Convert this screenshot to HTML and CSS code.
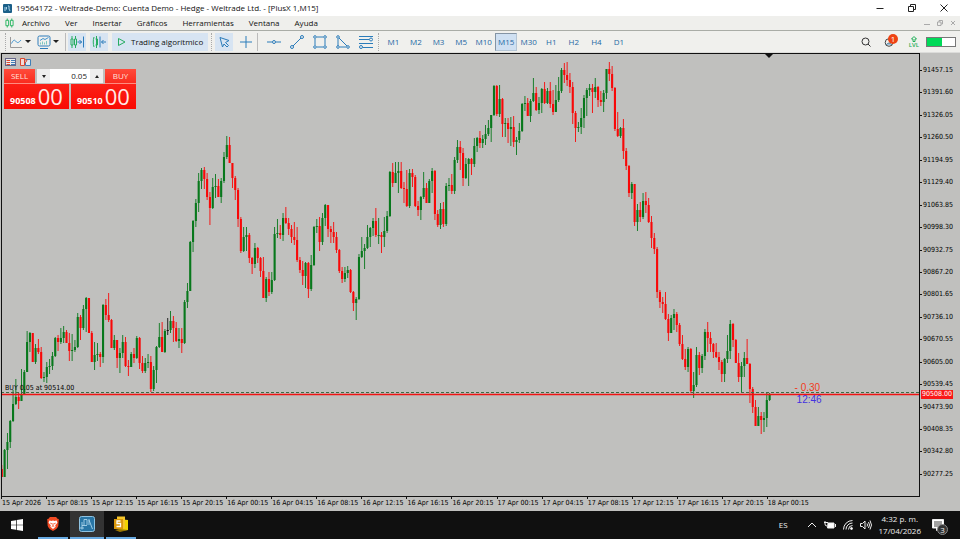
FILE: index.html
```html
<!DOCTYPE html>
<html lang="es">
<head>
<meta charset="utf-8">
<title>19564172 - Weltrade-Demo: Cuenta Demo - Hedge - Weltrade Ltd. - [PlusX 1,M15]</title>
<link rel="stylesheet" href="styles.css">
</head>
<body>
<header class="titlebar">
  <svg class="app-icon" viewBox="0 0 9 9"><rect width="9" height="9" rx="1" fill="#1b5f88"/><path d="M2 7V3M3.500 3v2.500M5 2h1v3l1 2" stroke="#a9d3ea" fill="none"/></svg>
  <h1 class="title">19564172 - Weltrade-Demo: Cuenta Demo - Hedge - Weltrade Ltd. - [PlusX 1,M15]</h1>
  <div class="window-buttons">
    <button aria-label="Minimizar"><svg viewBox="0 0 8 8"><path d="M0.500 4.500h7"/></svg></button>
    <button aria-label="Restaurar"><svg viewBox="0 0 8 8"><path d="M0.500 2.500h5v5h-5zM2.500 2V0.500h5v5H6"/></svg></button>
    <button aria-label="Cerrar"><svg viewBox="0 0 8 8"><path d="M0.500 0.500l7 7M7.500 0.500l-7 7"/></svg></button>
  </div>
</header>

<nav class="menubar">
  <svg class="menu-icon" viewBox="0 0 10 10"><path d="M2.500 0v2M2.500 8v2M1 2h3v6H1zM7.500 0v2M7.500 8v2M6 2h3v6H6z" fill="none" stroke="#1fb25a"/></svg>
  <a href="#">Archivo</a><a href="#">Ver</a><a href="#">Insertar</a><a href="#">Gráficos</a><a href="#">Herramientas</a><a href="#">Ventana</a><a href="#">Ayuda</a>
  <div class="child-buttons">
    <button aria-label="Minimizar gráfico"><svg viewBox="0 0 6 6"><path d="M0 4.500h6"/></svg></button>
    <button aria-label="Restaurar gráfico"><svg viewBox="0 0 6 6"><path d="M0.500 2h3.500v3.500h-3.500zM2 2V0.500h3.500v3.500H4"/></svg></button>
    <button aria-label="Cerrar gráfico"><svg viewBox="0 0 6 6"><path d="M1 1l4 4M5 1l-4 4"/></svg></button>
  </div>
</nav>

<div class="toolbar">
  <span class="grip"></span>
  <button class="tool tool-menu" aria-label="Tipo de gráfico"><svg class="icon" viewBox="0 0 14 14"><path d="M1.500 2v10.500H13" stroke="#9a9a9a"/><path d="M2.500 8.500c2-4 3-4 4.500-2s3 1 5-1.500" stroke="#3f93cf"/></svg><i class="caret"></i></button>
  <button class="tool tool-menu wide" aria-label="Indicadores"><svg class="icon" viewBox="0 0 14 14"><path d="M2.500 1h9q1.500 0 1.500 1.500v7q0 1.500-1.500 1.500h-9Q1 11 1 9.500v-7Q1 1 2.500 1zM3 13.500h8" stroke="#2f7dbb"/><path d="M3 5.500l3-2 2 1 3.500-2" stroke="#3f93cf"/><path d="M3.500 9.500V7.500M5.500 9.500V6.500M7.500 9.500V7.500M9.500 9.500V6" stroke="#7cc7c0"/></svg><i class="caret"></i></button>
  <span class="divider"></span>
  <button class="tool on" aria-label="Desplazamiento automático"><svg class="icon" viewBox="0 0 14 14"><path d="M2 1v3M2 10v3M1 4h2v6H1zM5.500 1v3M5.500 10v3M4.500 4h2v6h-2z" stroke="#27ad62"/><path d="M7.500 7H12M9.500 5l2 2-2 2M13.500 1.500v11" stroke="#2b7cba"/></svg></button>
  <button class="tool on" aria-label="Desplazar gráfico"><svg class="icon" viewBox="0 0 14 14"><path d="M2 2c-1 3-1 7 0 10M4.500 1v12M3.500 4h2v6h-2" stroke="#27ad62"/><path d="M8 1.500v11M14 7h-4.500M11.500 5l-2 2 2 2" stroke="#2b7cba"/></svg></button>
  <button class="tool on algo"><svg class="play" viewBox="0 0 9 10"><path d="M1.500 1.500v7L8 5z" fill="none" stroke="#27ad62"/></svg>Trading algorítmico</button>
  <span class="grip"></span>
  <button class="tool on" aria-label="Cursor"><svg class="icon" viewBox="0 0 14 14"><path d="M3 2.500l9 3-3.500 2 3 3-1.500 1.500-3-3-1.500 3z" stroke="#2b7cba"/></svg></button>
  <button class="tool draw" aria-label="Cruz"><svg class="icon" viewBox="0 0 14 14"><path d="M7 1v12M1 7h12" stroke="#2b7cba"/></svg></button>
  <span class="divider"></span>
  <div class="drawing">
    <button class="tool draw" aria-label="Línea horizontal"><svg class="icon" viewBox="0 0 14 14"><path d="M0 7h5M9 7h5" stroke="#2b7cba"/><circle cx="7" cy="7" r="1.500" stroke="#2b7cba"/></svg></button>
    <button class="tool draw" aria-label="Línea de tendencia"><svg class="icon" viewBox="0 0 14 14"><path d="M3 11l8-8" stroke="#2b7cba"/><circle cx="2" cy="12" r="1.500" stroke="#2b7cba"/><circle cx="12" cy="2" r="1.500" stroke="#2b7cba"/></svg></button>
    <button class="tool draw" aria-label="Rectángulo"><svg class="icon" viewBox="0 0 14 14"><path d="M2 4v6M12 4v6M4 2h6M4 12h6" stroke="#2b7cba"/><g stroke="#2b7cba"><circle cx="2" cy="2" r="1.300"/><circle cx="12" cy="2" r="1.300"/><circle cx="2" cy="12" r="1.300"/><circle cx="12" cy="12" r="1.300"/></g></svg></button>
    <button class="tool draw" aria-label="Triángulo"><svg class="icon" viewBox="0 0 14 14"><path d="M2 4v7M3 3l8 8M4 12h6" stroke="#2b7cba"/><g stroke="#2b7cba"><circle cx="2" cy="2" r="1.300"/><circle cx="2" cy="12" r="1.300"/><circle cx="12" cy="12" r="1.300"/></g></svg></button>
    <button class="tool draw" aria-label="Fibonacci"><svg class="icon" viewBox="0 0 14 14"><path d="M0 1.500h14M0 4.500h10M0 8.500h14M4 12.500h10" stroke="#2b7cba"/><circle cx="12" cy="4.500" r="1.500" stroke="#2b7cba"/><circle cx="2" cy="12" r="1.500" stroke="#2b7cba"/></svg></button>
  </div>
  <span class="grip"></span>
  <div class="timeframes">
    <button>M1</button><button>M2</button><button>M3</button><button>M5</button><button>M10</button><button class="selected">M15</button><button>M30</button><button>H1</button><button>H2</button><button>H4</button><button>D1</button>
  </div>
  <div class="toolbar-right">
    <button class="tool" aria-label="Buscar"><svg class="small-icon" viewBox="0 0 10 10"><circle cx="4.500" cy="4.500" r="3.500" stroke="#333"/><path d="M7 7l2.500 2.500" stroke="#333"/></svg></button>
    <button class="tool notice" aria-label="Notificaciones"><svg class="small-icon" viewBox="0 0 10 10"><circle cx="5" cy="5.500" r="3.800" stroke="#444"/><path d="M2 8q3-4 6 0" fill="#9fc4de" stroke="#5b7d93"/></svg><span class="badge">1</span></button>
    <button class="level" aria-label="Nivel"><svg viewBox="0 0 8 6"><path d="M4 0.500l2.500 2.500H5v2.500H3V3H1.500z" fill="none" stroke="#1dae56"/></svg>LVL</button>
    <span class="meter"><span></span></span>
  </div>
</div>

<main class="chart">
  <section class="plot">
    <svg id="candles" viewBox="2 54 917 442" preserveAspectRatio="none" role="img" aria-label="Gráfico de velas PlusX 1, M15"></svg>
    <span class="order-label">BUY 0.05 at 90514.00</span>
    <div class="position-info"><span class="result">- 0.30</span><span class="countdown">12:46</span></div>
    <div class="trade-panel">
      <div class="panel-icons">
        <svg viewBox="0 0 11 8"><rect x="0.500" y="0.500" width="10" height="7" fill="#eee" stroke="#668"/><path d="M1.500 2.500h3.500M1.500 4.500h3.500M1.500 6.500h3.500" stroke="#d9482f"/><path d="M6 2.500h4M6 4.500h4M6 6.500h4" stroke="#3f7fb8"/></svg>
        <svg viewBox="0 0 11 8"><path d="M0.500 0.500h4v7h-4z" fill="#f2dcd8" stroke="#d9482f"/><path d="M6 1.500h4.500v6H5.500V4" fill="#dbe8f2" stroke="#3f7fb8"/><path d="M4 1l3 1.500-2 2.500" stroke="#d9482f"/></svg>
      </div>
      <div class="order-row">
        <button class="side">SELL</button>
        <div class="volume">
          <button aria-label="Menos"><svg viewBox="0 0 4 3"><path d="M0 0h4L2 3z"/></svg></button>
          <input type="text" value="0.05" aria-label="Volumen">
          <button aria-label="Más"><svg viewBox="0 0 4 3"><path d="M0 3h4L2 0z"/></svg></button>
        </div>
        <button class="side">BUY</button>
      </div>
      <div class="quote-row">
        <button class="quote"><small>90508</small><b>00</b></button>
        <button class="quote"><small>90510</small><b>00</b></button>
      </div>
    </div>
  </section>
  <div class="prices" id="prices"><span class="last-price">90508.00</span></div>
  <div class="times" id="times"></div>
</main>

<footer class="taskbar">
  <button class="start" aria-label="Inicio"><svg viewBox="0 0 12 12"><path fill="#fff" d="M0 2l5-0.800V5.700H0zM5.700 1L12 0v5.700H5.700zM0 6.300h5v4.500L0 10zM5.700 6.300H12V12l-6.300-1z"/></svg></button>
  <button class="app" aria-label="Brave"><svg viewBox="0 0 16 18"><path d="M4.500 1h7L13 3l1.500 0.500-0.500 7.500q-0.500 3-6 6-5.500-3-6-6L1.500 3.500 3 3z" fill="#f04a23"/><path d="M4 5l2.500 0.500L8 5l1.500 0.500L12 5l1 2.500-2.500 3 0.500 1.500-3 2.500-3-2.500 0.500-1.500L3 7.500z" fill="#fff"/><path d="M5 8l2 1M11 8l-2 1M8 8v3M6.500 12L8 11l1.500 1" fill="none" stroke="#f04a23"/></svg></button>
  <button class="app active" aria-label="MetaTrader"><svg viewBox="0 0 16 16"><rect x="0.500" y="0.500" width="15" height="15" rx="2" fill="#2875a5" stroke="#8fc3e2"/><path d="M3 13.500V6M5 9.500V3.500h3V9M8 9.500H3M10 3v6M10 4l3.500 9M1 12h4" fill="none" stroke="#b8def2" stroke-width="0.800"/></svg></button>
  <button class="app" aria-label="Notas"><svg viewBox="0 0 16 16"><path d="M5 3l10 1v10l-9 1z" fill="#f1d500"/><path d="M4 0.500h8v12H4z" fill="#f6c62b"/><path d="M6 13l9 1-8 2-5-2z" fill="#9b7600"/><rect x="1" y="3" width="9" height="10" fill="#d9980c"/><path d="M7.500 5H4v2.500h3.500V10.500H3.500" fill="none" stroke="#fff" stroke-width="1.300"/></svg></button>
  <div class="tray">
    <span class="lang">ES</span>
    <svg viewBox="0 0 10 10"><path d="M1 7l4-4 4 4"/></svg>
    <svg class="battery" viewBox="0 0 12 10"><path d="M0 2.500h4M1 1v3q0 2 2 2"/><path d="M4 3h6v5H3.500z" fill="#fff"/><path d="M11.500 4v3"/></svg>
    <svg viewBox="0 0 10 10"><path d="M0.500 9.500A9 9 0 0 1 9.500 0.500M3 9.500A6.500 6.500 0 0 1 9.500 3M5.500 9.500A4 4 0 0 1 9.500 5.500"/><circle cx="8.500" cy="8.500" r="1" fill="#fff"/></svg>
    <svg class="speaker" viewBox="0 0 12 10"><path d="M0.500 3.500H2.500L5 1v8L2.500 6.500H0.500zM7 3.500q1 1.500 0 3M8.500 2q2 3 0 6M10 0.500q3 4.500 0 9"/></svg>
    <time class="clock">4:32 p. m.<br>17/04/2026</time>
    <button class="action-center" aria-label="Centro de actividades"><svg viewBox="0 0 12 12"><path d="M0.500 0.500h11v8.500H7L4.500 11.500V9h-4z" fill="#fff"/><path d="M2 3h8M2 5h8M2 7h5" stroke="#444"/></svg><span class="count">3</span></button>
  </div>
</footer>
<script src="chart.js"></script>
</body>
</html>
```
FILE: styles.css
```css
* { box-sizing: border-box; }
html, body { height: 100%; }
body {
  margin: 0;
  display: flex;
  flex-direction: column;
  overflow: hidden;
  background: #efefec;
  color: #111;
  font: 8px/12px "Open Sans", "Noto Sans", sans-serif;
}
button, input { font: inherit; color: inherit; margin: 0; padding: 0; border: 0; background: none; }
button { display: flex; align-items: center; justify-content: center; }
a { color: inherit; text-decoration: none; }
svg { display: block; flex: none; fill: none; }

.titlebar { display: flex; align-items: center; height: 16px; padding-left: 3px; background: #fff; }
.app-icon { width: 9px; height: 9px; }
.title { margin: 0 0 0 4px; font-size: 8px; font-weight: 400; white-space: nowrap; }
.window-buttons { display: flex; margin-left: auto; }
.window-buttons button { width: 32px; height: 14px; }
.window-buttons svg { width: 8px; height: 8px; stroke: #222; }

.menubar { display: flex; align-items: center; height: 15px; padding-left: 5px; gap: 15px; border-bottom: 1px solid #a9aca6; }
.menu-icon { width: 9px; height: 10px; margin-right: -7px; }
.child-buttons { display: flex; gap: 7px; margin-left: auto; padding-right: 4px; }
.child-buttons svg { width: 6px; height: 6px; stroke: #aaa; }

.toolbar { display: flex; align-items: center; height: 22px; padding: 0 4px 0 2px; background: #f0f0ed; border-bottom: 1px solid #dcdcda; }
.grip { width: 1px; height: 18px; margin: 0 3px; border-left: 1px dotted #aaa; }
.divider { width: 1px; height: 18px; margin: 0 2px; background: #bbb; }
.tool { height: 18px; padding: 0 2px; }
.tool.on { margin-right: 4px; background: #d7e4f2; }
.tool.on.algo { gap: 5px; padding: 0 5px; margin-right: 0; }
.tool-menu { justify-content: flex-start; gap: 2px; width: 28px; padding: 0; }
.tool-menu.wide { width: 26px; }
.caret { border: 3px solid transparent; border-top-color: #222; border-bottom: 0; }
.icon { width: 14px; height: 14px; }
.play { width: 9px; height: 10px; }
.drawing { display: flex; gap: 5px; padding-left: 5px; }
.timeframes { display: grid; grid-template-columns: repeat(11, minmax(0, 1fr)); width: 248px; color: #1f69a4; }
.timeframes button { height: 18px; }
.timeframes .selected { background: #cfe0f2; border: 1px solid #b4c5d5; border-top-color: #8494a4; border-left-color: #8494a4; }
.toolbar-right { display: flex; align-items: center; gap: 9px; margin-left: auto; }
.small-icon { width: 10px; height: 10px; }
.notice { position: relative; }
.badge { position: absolute; left: 6px; top: 1px; width: 10px; height: 10px; border-radius: 50%; background: #ee4313; color: #fff; font-size: 8px; line-height: 10px; text-align: center; }
.level { flex-direction: column; width: 12px; margin-left: 3px; color: #1dae56; font-size: 6px; font-weight: 600; line-height: 6px; }
.level svg { width: 8px; height: 6px; }
.meter { width: 30px; height: 10px; margin-left: -3px; border: 1px solid #777; background: #fff; }
.meter span { display: block; width: 55%; height: 100%; background: #00da58; }

.chart {
  flex: 1;
  min-height: 0;
  display: grid;
  grid-template: minmax(0, 1fr) 14px / minmax(0, 1fr) 40px;
  padding-left: 1px;
  background: #c0c0be;
  color: #000;
  font: 7px/11px "DejaVu Sans Condensed", "DejaVu Sans", sans-serif;
}
.plot { position: relative; min-width: 0; border: 1px solid #111; }
#candles { width: 100%; height: 100%; }
.order-label { position: absolute; left: 3px; top: 74%; padding-top: 2px; }
.position-info { position: absolute; left: 86%; top: 74%; display: grid; padding: 1px 4px; font: 10px/12px "Liberation Sans", sans-serif; }
.result { color: #f23a20; }
.countdown { color: #4330e0; padding-left: 2px; }
.prices { position: relative; display: flex; flex-direction: column; justify-content: space-between; padding: 12px 0 17px; }
.price { display: flex; align-items: center; gap: 1px; }
.price::before { content: ""; width: 2px; height: 1px; background: #111; }
.last-price { position: absolute; left: 1px; top: 76%; padding: 0 1px; line-height: 9px; background: #f91818; color: #fff; }
.times { display: grid; grid-template-columns: repeat(17, minmax(0, 45fr)) minmax(0, 153fr); }
.times span { border-left: 1px solid transparent; padding-top: 1px; white-space: nowrap; }
.times span::before { content: ""; display: block; width: 1px; height: 3px; margin: -2px 0 -1px -1px; background: #111; }

.trade-panel { position: absolute; left: 2px; top: 3px; width: 132px; color: #fff; font: 8px/12px "Open Sans", sans-serif; }
.panel-icons { display: flex; gap: 4px; height: 12px; padding: 1px 1px 0; }
.panel-icons svg { width: 11px; height: 8px; }
.order-row, .quote-row { display: flex; justify-content: space-between; }
.order-row { height: 15px; }
.side { width: 31px; height: 15px; background: linear-gradient(#ff4b3b, #f92c1f); color: #ffe0dc; border-bottom: 1px solid #ff8c80; }
.volume { display: flex; width: 66px; height: 14px; color: #222; }
.volume button { width: 13px; background: #eee; }
.volume svg { width: 4px; height: 3px; fill: #222; }
.volume input { flex: 1; min-width: 0; padding-right: 3px; background: #fff; text-align: right; }
.quote { align-items: flex-end; gap: 2px; width: 65px; height: 25px; padding-bottom: 2px; background: linear-gradient(#fb2017, #fa0a02); }
.quote small { font: bold 9px/12px "Noto Sans", sans-serif; }
.quote b { color: #ffe9e6; font: 22px/22px "Open Sans", sans-serif; }

.taskbar { display: flex; height: 28px; flex: none; background: #101010; color: #eee; }
.start { width: 33px; margin-right: 5px; }
.start svg { width: 12px; height: 12px; }
.app { width: 30px; margin-right: 2px; border-bottom: 2px solid #68aae2; }
.app.active { width: 34px; background: #333; }
.app svg { width: 16px; height: 16px; }
.tray { display: flex; align-items: center; gap: 7px; margin-left: auto; padding-right: 11px; }
.tray svg { width: 10px; height: 10px; stroke: #eee; }
.tray .battery, .tray .speaker { width: 12px; }
.lang { margin-right: 12px; }
.clock { text-align: center; white-space: nowrap; margin-right: 4px; }
.action-center { position: relative; height: 28px; padding-right: 5px; }
.tray .action-center svg { width: 12px; height: 12px; }
.count { position: absolute; left: 5px; top: 13px; width: 11px; height: 11px; border: 1px solid #888; border-radius: 50%; background: #333; line-height: 9px; text-align: center; }
```
FILE: chart.js
```js
// Each candle is "close,high,low" in plot units; it opens at the previous close.
const FIRST_OPEN = 469;
const CANDLES = `
477,465,477 450,449,477 442,433,469 421,420,448 404,390,422 397,379,405 401,393,409 395,369,401
372,370,395 342,331,372 333,332,352 362,333,362 348,344,364 352,339,354 378,347,379 377,372,382
367,362,383 366,359,374 356,352,370 338,337,357 342,335,351 338,328,344 332,326,343 343,330,343
351,333,361 350,334,361 347,340,352 317,313,348 328,315,340 309,305,330 298,297,332 333,298,333
362,331,362 355,342,370 354,343,361 357,352,367 305,304,363 315,299,320 320,293,322 348,319,348
340,335,350 358,340,368 353,348,373 342,335,358 366,337,367 367,360,376 354,352,367 358,348,363
338,336,359 363,337,369 371,356,373 363,358,373 362,354,368 389,356,392 370,366,391 347,346,383
337,323,348 352,322,352 331,329,353 330,318,335 321,311,333 328,316,342 341,322,342 339,328,348
343,328,353 302,300,344 291,283,308 242,241,291 221,220,252 203,199,227 181,173,212 170,168,189
179,167,189 197,173,200 208,192,225 187,178,209 186,174,198 197,179,197 181,178,203 157,152,183
145,136,159 163,137,163 178,163,188 190,176,200 219,188,227 251,217,253 237,227,252 235,227,251
258,233,263 264,257,274 248,243,268 258,247,263 271,257,277 298,257,298 279,277,302 292,272,296
280,272,294 234,227,281 233,219,238 235,225,239 218,213,241 223,207,224 229,218,235 237,225,243
240,222,245 260,227,262 270,257,273 276,261,285 263,262,288 289,262,298 265,255,291 227,226,266
226,219,233 242,217,251 218,213,245 205,204,226 229,205,237 232,226,243 237,222,243 250,232,253
271,249,273 279,267,283 273,267,282 270,266,278 292,269,293 303,291,311 299,297,320 257,254,300
251,237,258 248,244,269 237,225,249 228,227,247 221,218,236 235,208,237 235,218,244 237,232,253
231,217,247 216,211,233 172,171,217 183,163,187 173,162,183 171,162,193 188,162,189 189,182,203
206,170,207 173,169,208 177,169,187 206,175,207 210,201,216 197,196,220 188,172,199 203,183,203
181,179,203 171,168,193 214,170,220 225,210,227 209,203,229 224,202,227 186,183,226 185,178,191
191,174,194 160,157,194 147,140,163 153,141,170 178,148,186 164,158,179 159,158,186 164,158,175
146,138,167 138,137,152 143,131,148 139,135,148 134,125,145 128,120,136 115,115,142 86,85,116
114,85,116 99,85,117 124,98,137 123,118,137 129,118,143 127,117,146 142,116,147 140,137,155
131,123,143 104,103,132 103,96,111 116,98,116 101,99,122 93,78,102 110,87,111 103,97,114
89,88,113 103,82,104 91,88,104 104,82,108 112,90,115 100,85,112 91,77,102 70,68,93
75,63,83 80,62,86 87,73,93 113,82,124 128,111,142 127,122,132 118,108,134 98,95,128
90,88,116 88,84,96 92,84,113 87,78,98 100,86,107 102,91,106 93,90,112 69,69,99
74,62,81 88,66,91 129,87,131 136,112,137 128,127,138 151,119,159 166,148,170 193,165,197
184,182,199 222,184,226 210,204,231 217,202,222 201,193,219 205,192,213 222,198,223 238,216,248
249,233,254 292,247,298 302,290,308 304,297,313 319,292,320 333,314,341 318,315,333 314,309,330
325,312,332 344,323,346 359,335,360 367,349,370 349,347,372 391,348,393 385,372,398 355,347,387
368,352,375 356,354,373 332,329,360 338,322,352 344,332,352 352,343,358 357,343,358 362,352,370
374,360,382 359,358,382 351,335,363 324,320,359 340,323,347 363,339,363 377,353,382 366,362,393
358,352,377 364,339,364 389,363,403 407,387,413 426,400,426 416,407,425 420,412,434 418,412,432
400,393,427 394,393,401`.trim().split(/\s+/).map(c => c.split(",").map(Number));

const STEP = 45 / 16;
const UP = "#08781c";
const DOWN = "#f80808";
const NEUTRAL_INDEX = 59;

let open = FIRST_OPEN;
let shapes = "";
CANDLES.forEach(([close, high, low], i) => {
  const x = 1.8 + i * STEP;
  const color = i === NEUTRAL_INDEX ? "#111" : close > open ? DOWN : UP;
  const top = Math.min(open, close);
  const height = Math.max(1, Math.abs(close - open));
  shapes += `<rect x="${x - 0.45}" y="${high}" width="0.9" height="${low - high}" fill="${color}"/>`;
  shapes += `<rect x="${x - 1.05}" y="${top}" width="2.1" height="${height}" fill="${color}"/>`;
  open = close;
});
shapes += `<path d="M1 392.5H919" stroke="#3d6b45" stroke-dasharray="3 2"/>`;
shapes += `<path d="M1 394.5H919" stroke="#ee1414" stroke-width="1.5"/>`;
shapes += `<path d="M765 54h8l-4 4z" fill="#111"/>`;
document.getElementById("candles").innerHTML = shapes;

const prices = document.getElementById("prices");
for (let i = 0; i < 19; i++) {
  const label = document.createElement("span");
  label.className = "price";
  label.textContent = (91457.15 - i * 65.55 + (i > 0 ? 0.0001 : 0)).toFixed(2);
  prices.append(label);
}

const HOURS = {
  15: ["2026", "08:15", "12:15", "16:15", "20:15"],
  16: ["00:15", "04:15", "08:15", "12:15", "16:15", "20:15"],
  17: ["00:15", "04:15", "08:15", "12:15", "16:15", "20:15"],
  18: ["00:15"]
};
const times = document.getElementById("times");
Object.keys(HOURS).forEach(day => HOURS[day].forEach(hour => {
  const label = document.createElement("span");
  label.textContent = `${day} Apr ${hour}`;
  times.append(label);
}));
```
